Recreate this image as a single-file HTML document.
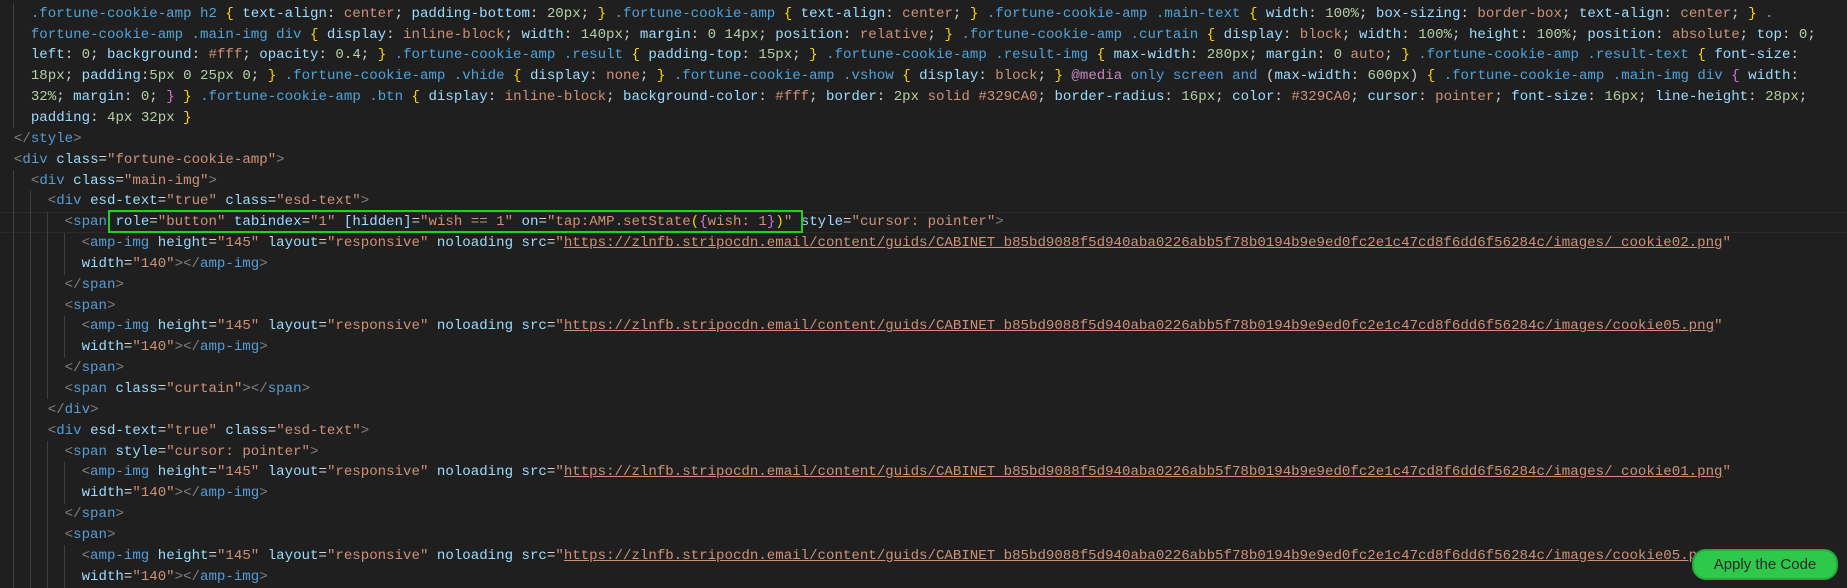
<!DOCTYPE html>
<html><head><meta charset="utf-8"><style>
html,body{margin:0;padding:0;background:#1f1f1f;width:1847px;height:588px;overflow:hidden}
#ed{position:absolute;left:-3px;top:3.8px;font-family:"Liberation Mono",monospace;font-size:14.1px;color:#d4d4d4}
.l{height:20.85px;line-height:20.85px;white-space:pre;position:relative}
.t{color:#569cd6}.p{color:#808080}.a{color:#9cdcfe}.s{color:#ce9178}.u{color:#ce9178;text-decoration:underline}
.sel{color:#4fa3d9}.pr{color:#9cdcfe}.v{color:#ce9178}.n{color:#b5cea8}.b{color:#ffd700}.m{color:#da70d6}.k{color:#c586c0}.w{color:#d4d4d4}
.g{position:absolute;width:1px;background:#404040}
#cur{position:absolute;left:0;width:1847px;top:212px;height:19px;border-top:1px solid #2a2a2a;border-bottom:1px solid #2a2a2a}
#box{position:absolute;left:108px;top:210px;width:691px;height:19px;border:2px solid #1ed31e}
#btn{position:absolute;left:1692px;top:549px;width:142px;height:27px;border-radius:14px;background:#2ec94a;border:2px solid #27a83d;color:#2a2a2a;font-family:"Liberation Sans",sans-serif;font-size:15px;line-height:27px;text-align:center}
</style></head><body>
<div id="cur"></div>
<div class="g" style="left:13px;top:3px;height:125px"></div>
<div class="g" style="left:13px;top:170px;height:418px"></div>
<div class="g" style="left:30px;top:191px;height:397px"></div>
<div class="g" style="left:47px;top:212px;height:187px"></div>
<div class="g" style="left:47px;top:441px;height:147px"></div>
<div class="g" style="left:64px;top:233px;height:42px"></div>
<div class="g" style="left:64px;top:316px;height:42px"></div>
<div class="g" style="left:64px;top:462px;height:42px"></div>
<div class="g" style="left:64px;top:545px;height:43px"></div>
<div id="ed">
<div class="l">    <span class="sel">.fortune-cookie-amp h2</span> <span class="b">{</span> <span class="pr">text-align</span>: <span class="v">center</span>; <span class="pr">padding-bottom</span>: <span class="n">20px</span>; <span class="b">}</span> <span class="sel">.fortune-cookie-amp</span> <span class="b">{</span> <span class="pr">text-align</span>: <span class="v">center</span>; <span class="b">}</span> <span class="sel">.fortune-cookie-amp .main-text</span> <span class="b">{</span> <span class="pr">width</span>: <span class="n">100%</span>; <span class="pr">box-sizing</span>: <span class="v">border-box</span>; <span class="pr">text-align</span>: <span class="v">center</span>; <span class="b">}</span> <span class="sel">.</span></div>
<div class="l">    <span class="sel">fortune-cookie-amp .main-img div</span> <span class="b">{</span> <span class="pr">display</span>: <span class="v">inline-block</span>; <span class="pr">width</span>: <span class="n">140px</span>; <span class="pr">margin</span>: <span class="n">0 14px</span>; <span class="pr">position</span>: <span class="v">relative</span>; <span class="b">}</span> <span class="sel">.fortune-cookie-amp .curtain</span> <span class="b">{</span> <span class="pr">display</span>: <span class="v">block</span>; <span class="pr">width</span>: <span class="n">100%</span>; <span class="pr">height</span>: <span class="n">100%</span>; <span class="pr">position</span>: <span class="v">absolute</span>; <span class="pr">top</span>: <span class="n">0</span>;</div>
<div class="l">    <span class="pr">left</span>: <span class="n">0</span>; <span class="pr">background</span>: <span class="v">#fff</span>; <span class="pr">opacity</span>: <span class="n">0.4</span>; <span class="b">}</span> <span class="sel">.fortune-cookie-amp .result</span> <span class="b">{</span> <span class="pr">padding-top</span>: <span class="n">15px</span>; <span class="b">}</span> <span class="sel">.fortune-cookie-amp .result-img</span> <span class="b">{</span> <span class="pr">max-width</span>: <span class="n">280px</span>; <span class="pr">margin</span>: <span class="n">0</span> <span class="v">auto</span>; <span class="b">}</span> <span class="sel">.fortune-cookie-amp .result-text</span> <span class="b">{</span> <span class="pr">font-size</span>:</div>
<div class="l">    <span class="n">18px</span>; <span class="pr">padding</span>:<span class="n">5px 0 25px 0</span>; <span class="b">}</span> <span class="sel">.fortune-cookie-amp .vhide</span> <span class="b">{</span> <span class="pr">display</span>: <span class="v">none</span>; <span class="b">}</span> <span class="sel">.fortune-cookie-amp .vshow</span> <span class="b">{</span> <span class="pr">display</span>: <span class="v">block</span>; <span class="b">}</span> <span class="k">@media</span> <span class="t">only screen and</span> (<span class="pr">max-width</span>: <span class="n">600px</span>) <span class="b">{</span> <span class="sel">.fortune-cookie-amp .main-img div</span> <span class="m">{</span> <span class="pr">width</span>:</div>
<div class="l">    <span class="n">32%</span>; <span class="pr">margin</span>: <span class="n">0</span>; <span class="m">}</span> <span class="b">}</span> <span class="sel">.fortune-cookie-amp .btn</span> <span class="b">{</span> <span class="pr">display</span>: <span class="v">inline-block</span>; <span class="pr">background-color</span>: <span class="v">#fff</span>; <span class="pr">border</span>: <span class="n">2px</span> <span class="v">solid</span> <span class="v">#329CA0</span>; <span class="pr">border-radius</span>: <span class="n">16px</span>; <span class="pr">color</span>: <span class="v">#329CA0</span>; <span class="pr">cursor</span>: <span class="v">pointer</span>; <span class="pr">font-size</span>: <span class="n">16px</span>; <span class="pr">line-height</span>: <span class="n">28px</span>;</div>
<div class="l">    <span class="pr">padding</span>: <span class="n">4px 32px</span> <span class="b">}</span></div>
<div class="l">  <span class="p">&lt;/</span><span class="t">style</span><span class="p">&gt;</span></div>
<div class="l">  <span class="p">&lt;</span><span class="t">div</span> <span class="a">class</span>=<span class="s">"fortune-cookie-amp"</span><span class="p">&gt;</span></div>
<div class="l">    <span class="p">&lt;</span><span class="t">div</span> <span class="a">class</span>=<span class="s">"main-img"</span><span class="p">&gt;</span></div>
<div class="l">      <span class="p">&lt;</span><span class="t">div</span> <span class="a">esd-text</span>=<span class="s">"true"</span> <span class="a">class</span>=<span class="s">"esd-text"</span><span class="p">&gt;</span></div>
<div class="l">        <span class="p">&lt;</span><span class="t">span</span> <span class="a">role</span>=<span class="s">"button"</span> <span class="a">tabindex</span>=<span class="s">"1"</span> <span class="a">[hidden]</span>=<span class="s">"wish == 1"</span> <span class="a">on</span>=<span class="s">"tap:AMP.setState<span class="b">(</span><span class="m">{</span>wish: 1<span class="m">}</span><span class="b">)</span>"</span> <span class="a">style</span>=<span class="s">"cursor: pointer"</span><span class="p">&gt;</span></div>
<div class="l">          <span class="p">&lt;</span><span class="t">amp-img</span> <span class="a">height</span>=<span class="s">"145"</span> <span class="a">layout</span>=<span class="s">"responsive"</span> <span class="a">noloading</span> <span class="a">src</span>=<span class="s">"</span><span class="u">https://zlnfb.stripocdn.email/content/guids/CABINET_b85bd9088f5d940aba0226abb5f78b0194b9e9ed0fc2e1c47cd8f6dd6f56284c/images/_cookie02.png</span><span class="s">"</span></div>
<div class="l">          <span class="a">width</span>=<span class="s">"140"</span><span class="p">&gt;&lt;/</span><span class="t">amp-img</span><span class="p">&gt;</span></div>
<div class="l">        <span class="p">&lt;/</span><span class="t">span</span><span class="p">&gt;</span></div>
<div class="l">        <span class="p">&lt;</span><span class="t">span</span><span class="p">&gt;</span></div>
<div class="l">          <span class="p">&lt;</span><span class="t">amp-img</span> <span class="a">height</span>=<span class="s">"145"</span> <span class="a">layout</span>=<span class="s">"responsive"</span> <span class="a">noloading</span> <span class="a">src</span>=<span class="s">"</span><span class="u">https://zlnfb.stripocdn.email/content/guids/CABINET_b85bd9088f5d940aba0226abb5f78b0194b9e9ed0fc2e1c47cd8f6dd6f56284c/images/cookie05.png</span><span class="s">"</span></div>
<div class="l">          <span class="a">width</span>=<span class="s">"140"</span><span class="p">&gt;&lt;/</span><span class="t">amp-img</span><span class="p">&gt;</span></div>
<div class="l">        <span class="p">&lt;/</span><span class="t">span</span><span class="p">&gt;</span></div>
<div class="l">        <span class="p">&lt;</span><span class="t">span</span> <span class="a">class</span>=<span class="s">"curtain"</span><span class="p">&gt;&lt;/</span><span class="t">span</span><span class="p">&gt;</span></div>
<div class="l">      <span class="p">&lt;/</span><span class="t">div</span><span class="p">&gt;</span></div>
<div class="l">      <span class="p">&lt;</span><span class="t">div</span> <span class="a">esd-text</span>=<span class="s">"true"</span> <span class="a">class</span>=<span class="s">"esd-text"</span><span class="p">&gt;</span></div>
<div class="l">        <span class="p">&lt;</span><span class="t">span</span> <span class="a">style</span>=<span class="s">"cursor: pointer"</span><span class="p">&gt;</span></div>
<div class="l">          <span class="p">&lt;</span><span class="t">amp-img</span> <span class="a">height</span>=<span class="s">"145"</span> <span class="a">layout</span>=<span class="s">"responsive"</span> <span class="a">noloading</span> <span class="a">src</span>=<span class="s">"</span><span class="u">https://zlnfb.stripocdn.email/content/guids/CABINET_b85bd9088f5d940aba0226abb5f78b0194b9e9ed0fc2e1c47cd8f6dd6f56284c/images/_cookie01.png</span><span class="s">"</span></div>
<div class="l">          <span class="a">width</span>=<span class="s">"140"</span><span class="p">&gt;&lt;/</span><span class="t">amp-img</span><span class="p">&gt;</span></div>
<div class="l">        <span class="p">&lt;/</span><span class="t">span</span><span class="p">&gt;</span></div>
<div class="l">        <span class="p">&lt;</span><span class="t">span</span><span class="p">&gt;</span></div>
<div class="l">          <span class="p">&lt;</span><span class="t">amp-img</span> <span class="a">height</span>=<span class="s">"145"</span> <span class="a">layout</span>=<span class="s">"responsive"</span> <span class="a">noloading</span> <span class="a">src</span>=<span class="s">"</span><span class="u">https://zlnfb.stripocdn.email/content/guids/CABINET_b85bd9088f5d940aba0226abb5f78b0194b9e9ed0fc2e1c47cd8f6dd6f56284c/images/cookie05.png</span><span class="s">"</span></div>
<div class="l">          <span class="a">width</span>=<span class="s">"140"</span><span class="p">&gt;&lt;/</span><span class="t">amp-img</span><span class="p">&gt;</span></div>
</div>
<div id="box"></div>
<div id="btn">Apply the Code</div>
</body></html>
